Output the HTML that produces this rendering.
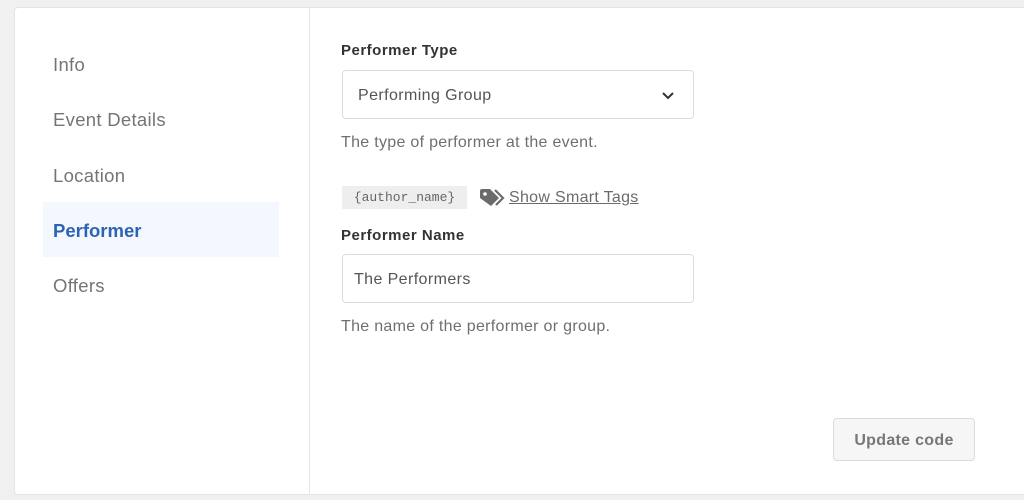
<!DOCTYPE html>
<html><head><style>
body{margin:0;width:1024px;height:500px;background:#f0f0f1;font-family:"Liberation Sans",sans-serif;position:relative;overflow:hidden}
.card{position:absolute;left:14px;top:7px;width:1020px;height:486px;background:#fff;border:1px solid #e2e4e7;border-radius:4px}
.side{position:absolute;left:309px;top:7px;width:1px;height:487px;background:#e6e6e6}
.nav{position:absolute;left:53px;font-size:18.5px;color:#757575;line-height:20px;letter-spacing:0.3px}
.act{position:absolute;left:43px;top:202px;width:236px;height:55px;background:#f4f8fe}
.lbl{position:absolute;left:341px;font-size:15px;font-weight:bold;color:#333;letter-spacing:0.5px}
.box{position:absolute;left:342px;width:352px;border:1px solid #dcdcde;border-radius:4px;font-size:16px;color:#555;box-sizing:border-box;letter-spacing:0.4px}
.help{position:absolute;left:341px;font-size:16px;color:#6f6f6f;letter-spacing:0.3px}
</style></head><body>
<div class="card"></div>
<div class="side"></div>
<div class="act"></div>
<div class="nav" style="top:55px">Info</div>
<div class="nav" style="top:110px">Event Details</div>
<div class="nav" style="top:166px">Location</div>
<div class="nav" style="top:221px;color:#2d63b4;font-weight:bold;letter-spacing:0">Performer</div>
<div class="nav" style="top:276px">Offers</div>
<div class="lbl" style="top:42px">Performer Type</div>
<div class="box" style="top:70px;height:49px;line-height:49px;padding-left:15px">Performing Group
<svg style="position:absolute;right:18px;top:20px" width="14" height="9" viewBox="0 0 14 9"><path d="M2 2l5 5 5-5" fill="none" stroke="#333" stroke-width="2"/></svg></div>
<div class="help" style="top:134px">The type of performer at the event.</div>
<div style="position:absolute;left:342px;top:186px;width:125px;height:23px;background:#eee;font-family:'Liberation Mono',monospace;font-size:13px;color:#666;line-height:23px;text-align:center">{author_name}</div>
<svg style="position:absolute;left:479px;top:188px" width="27" height="20" viewBox="0 0 27 20"><path d="M1 3a2 2 0 0 1 2-2h8l9 9-8 8L1 10z" fill="#6b6b6b"/><circle cx="6" cy="6" r="1.8" fill="#fff"/><path d="M16 2l8 8-7 7" fill="none" stroke="#6b6b6b" stroke-width="2.2"/></svg>
<div style="position:absolute;left:509px;top:189px;font-size:16px;color:#6b6b6b;text-decoration:underline;letter-spacing:0.3px">Show Smart Tags</div>
<div class="lbl" style="top:227px">Performer Name</div>
<div class="box" style="top:254px;height:49px;line-height:49px;padding-left:11px">The Performers</div>
<div class="help" style="top:318px">The name of the performer or group.</div>
<div style="position:absolute;left:833px;top:418px;width:142px;height:43px;box-sizing:border-box;border:1px solid #dcdcde;border-radius:4px;background:#f6f6f6;color:#777;font-weight:bold;font-size:16px;line-height:43px;text-align:center;letter-spacing:0.3px">Update code</div>
</body></html>
